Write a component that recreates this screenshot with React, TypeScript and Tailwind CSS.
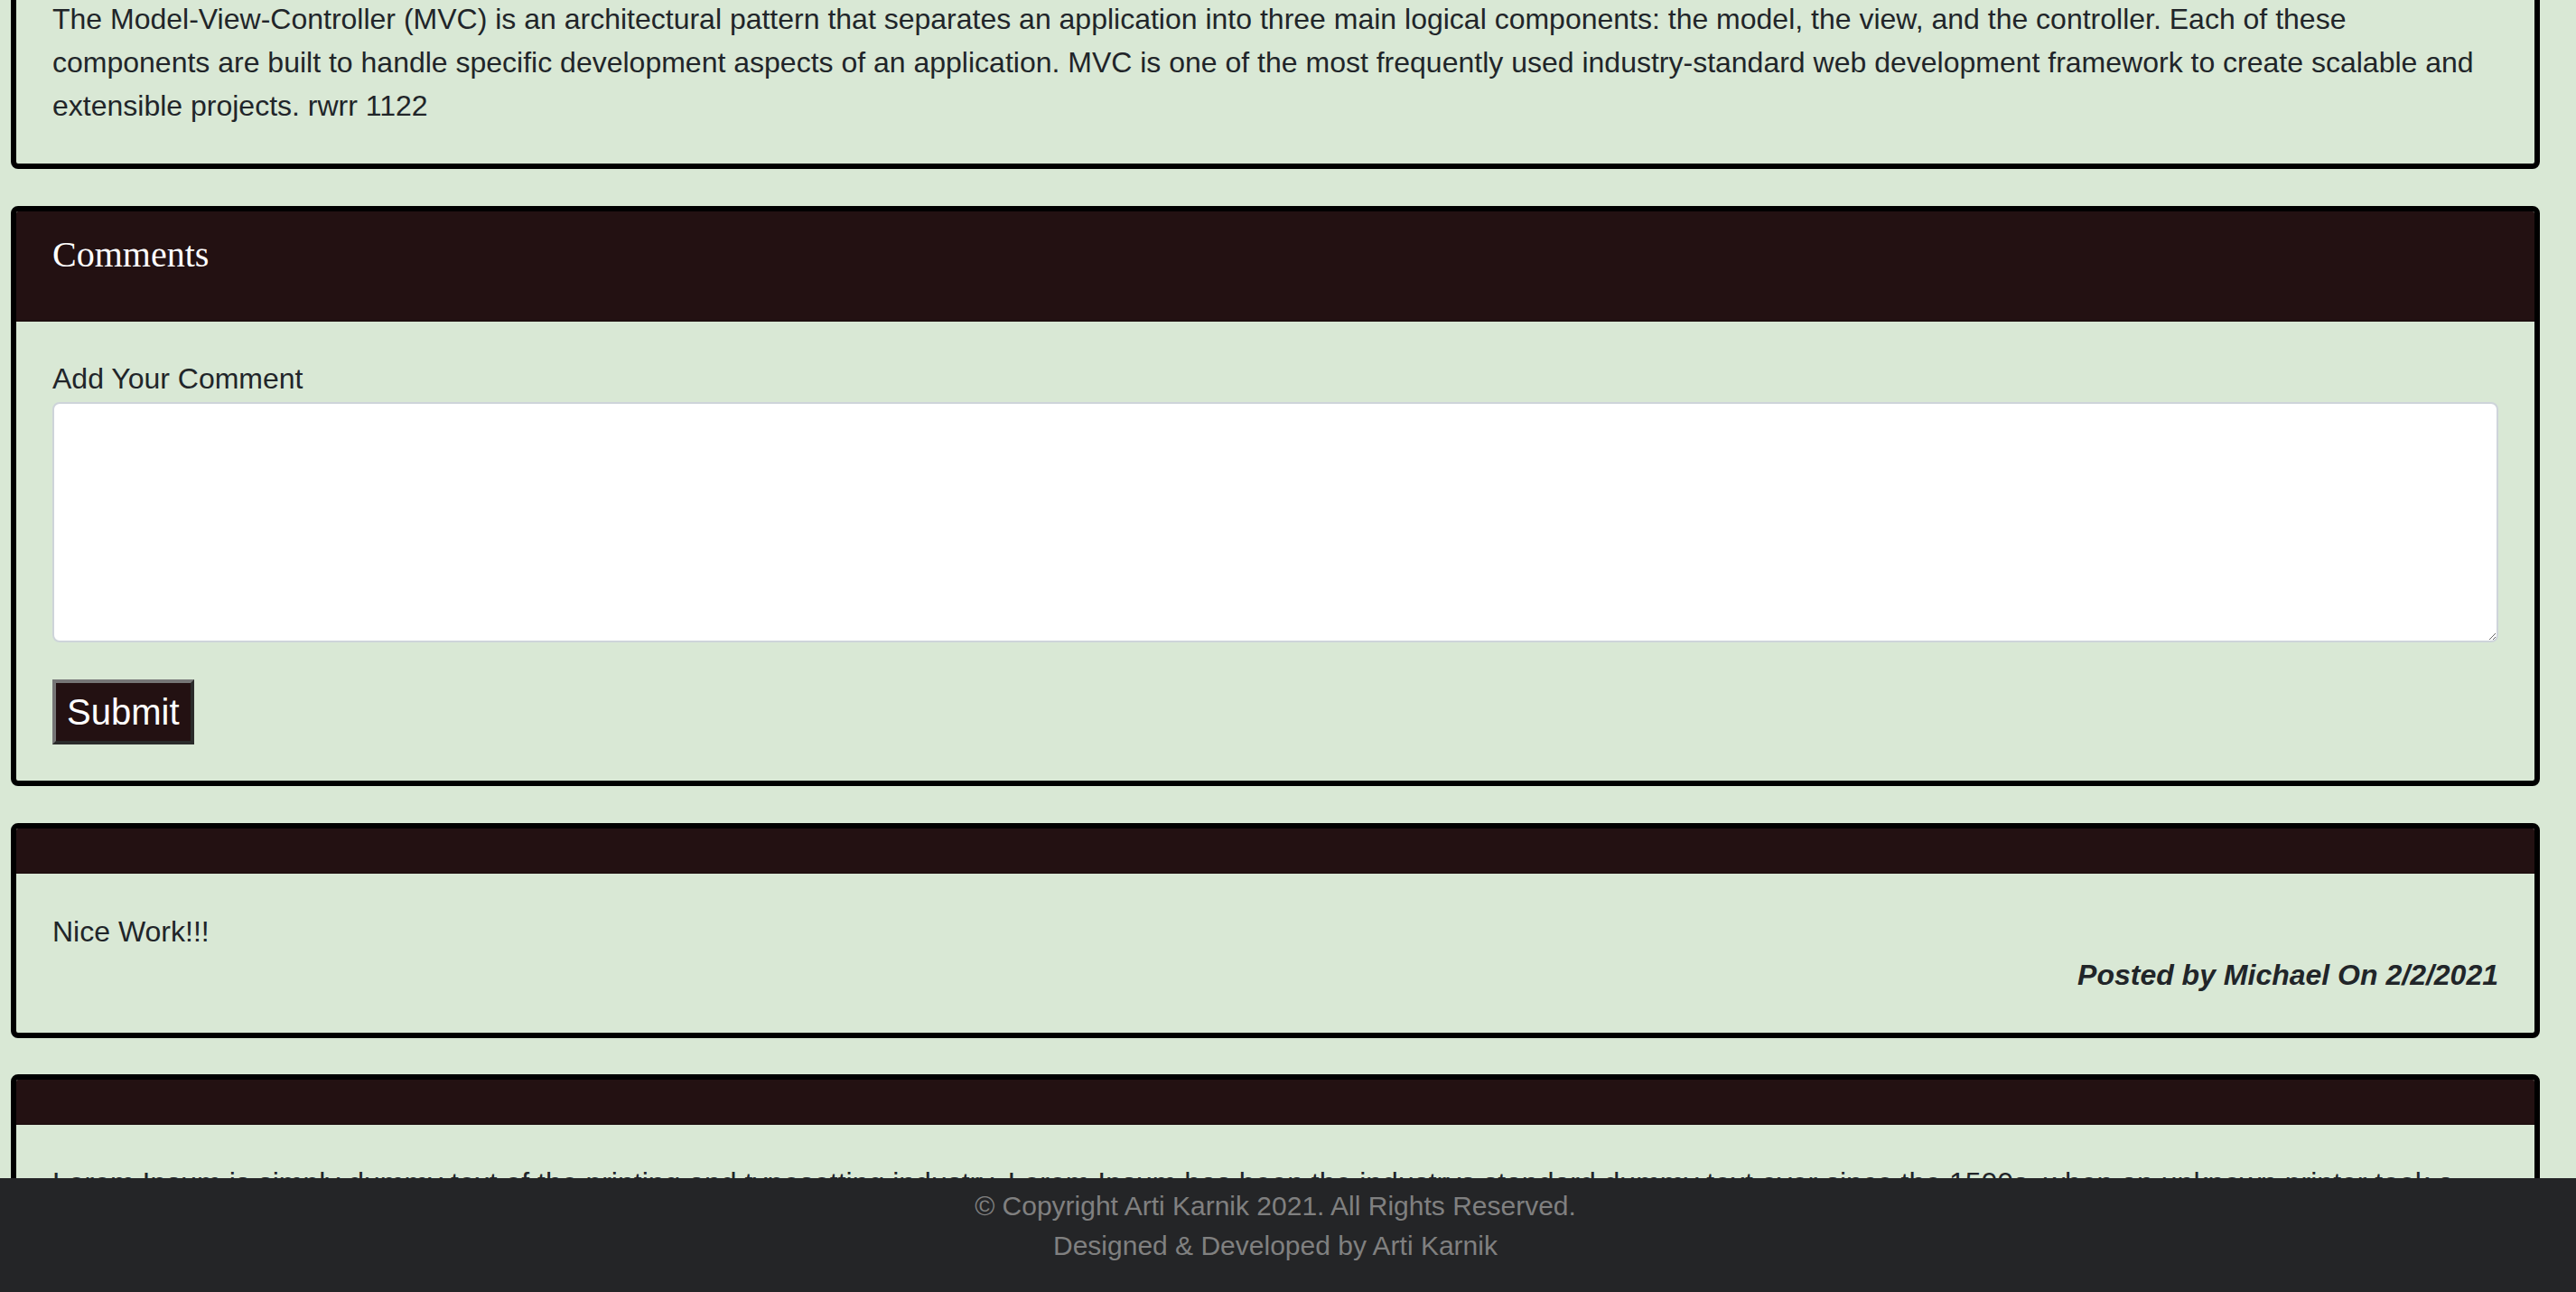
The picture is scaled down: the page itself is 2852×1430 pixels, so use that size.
import React from "react";

const sans = "font-['Liberation_Sans',Arial,sans-serif]";

function Card({
  title,
  className = "",
  children,
}: {
  title?: string;
  className?: string;
  children: React.ReactNode;
}) {
  return (
    <div className={`rounded-[8px] border-[6px] border-black overflow-hidden ${className}`}>
      {title !== undefined && (
        <div className="bg-[#231112] border-b-2 border-black/10 px-[40px] pt-[24px] pb-[48px] min-h-[50px]">
          {title && (
            <h5 className="font-['Liberation_Serif','Times_New_Roman',serif] text-[40px] leading-[48px] text-white">
              {title}
            </h5>
          )}
        </div>
      )}
      <div className="px-[40px] py-[40px]">{children}</div>
    </div>
  );
}

function EmptyHeaderCard({ children, className = "" }: { children: React.ReactNode; className?: string }) {
  return (
    <div className={`rounded-[8px] border-[6px] border-black overflow-hidden ${className}`}>
      <div className="h-[50px] bg-[#231112] border-b-2 border-black/10" />
      <div className="px-[40px] py-[40px]">{children}</div>
    </div>
  );
}

export default function App() {
  return (
    <div className={`h-screen overflow-hidden flex flex-col bg-[#d9e8d5] text-[#212529] text-[32px] leading-[48px] ${sans}`}>
      <main className="h-[1304px] shrink-0 overflow-hidden">
        <div className="w-[2824px] px-[12px]">
          <Card className="-mt-[49px]">
            <p>
              The Model-View-Controller (MVC) is an architectural pattern that separates an application into three main
              logical components: the model, the view, and the controller. Each of these components are built to handle
              specific development aspects of an application. MVC is one of the most frequently used industry-standard
              web development framework to create scalable and extensible projects. rwrr 1122
            </p>
          </Card>

          <Card title="Comments" className="mt-[41px]">
            <label className="block -mt-[1px]">Add Your Comment</label>
            <textarea className="block w-full h-[266px] mt-[2px] bg-white border-2 border-[#ced4da] rounded-[8px] outline-none" />
            <button
              className={`mt-[41px] h-[72px] px-[12px] bg-[#231112] text-white text-[40px] leading-[46px] border-[4px] border-t-[#767676] border-l-[#767676] border-b-[#2b2b2b] border-r-[#2b2b2b] ${sans}`}
            >
              Submit
            </button>
          </Card>

          <EmptyHeaderCard className="mt-[41px]">
            <p>Nice Work!!!</p>
            <p className="text-right font-bold italic">Posted by Michael On 2/2/2021</p>
          </EmptyHeaderCard>

          <EmptyHeaderCard className="mt-[40px]">
            <p>
              Lorem Ipsum is simply dummy text of the printing and typesetting industry. Lorem Ipsum has been the
              industrys standard dummy text ever since the 1500s, when an unknown printer took a galley of type and
              scrambled it to make a type specimen book.
            </p>
            <p className="text-right font-bold italic">Posted by Arti On 1/2/2021</p>
          </EmptyHeaderCard>
        </div>
      </main>

      <footer className="flex-1 bg-[#242527] pr-[28px] pt-[9px] text-center text-[30px] leading-[44px] text-[#808080]">
        <p>© Copyright Arti Karnik 2021. All Rights Reserved.</p>
        <p>Designed &amp; Developed by Arti Karnik</p>
      </footer>
    </div>
  );
}
